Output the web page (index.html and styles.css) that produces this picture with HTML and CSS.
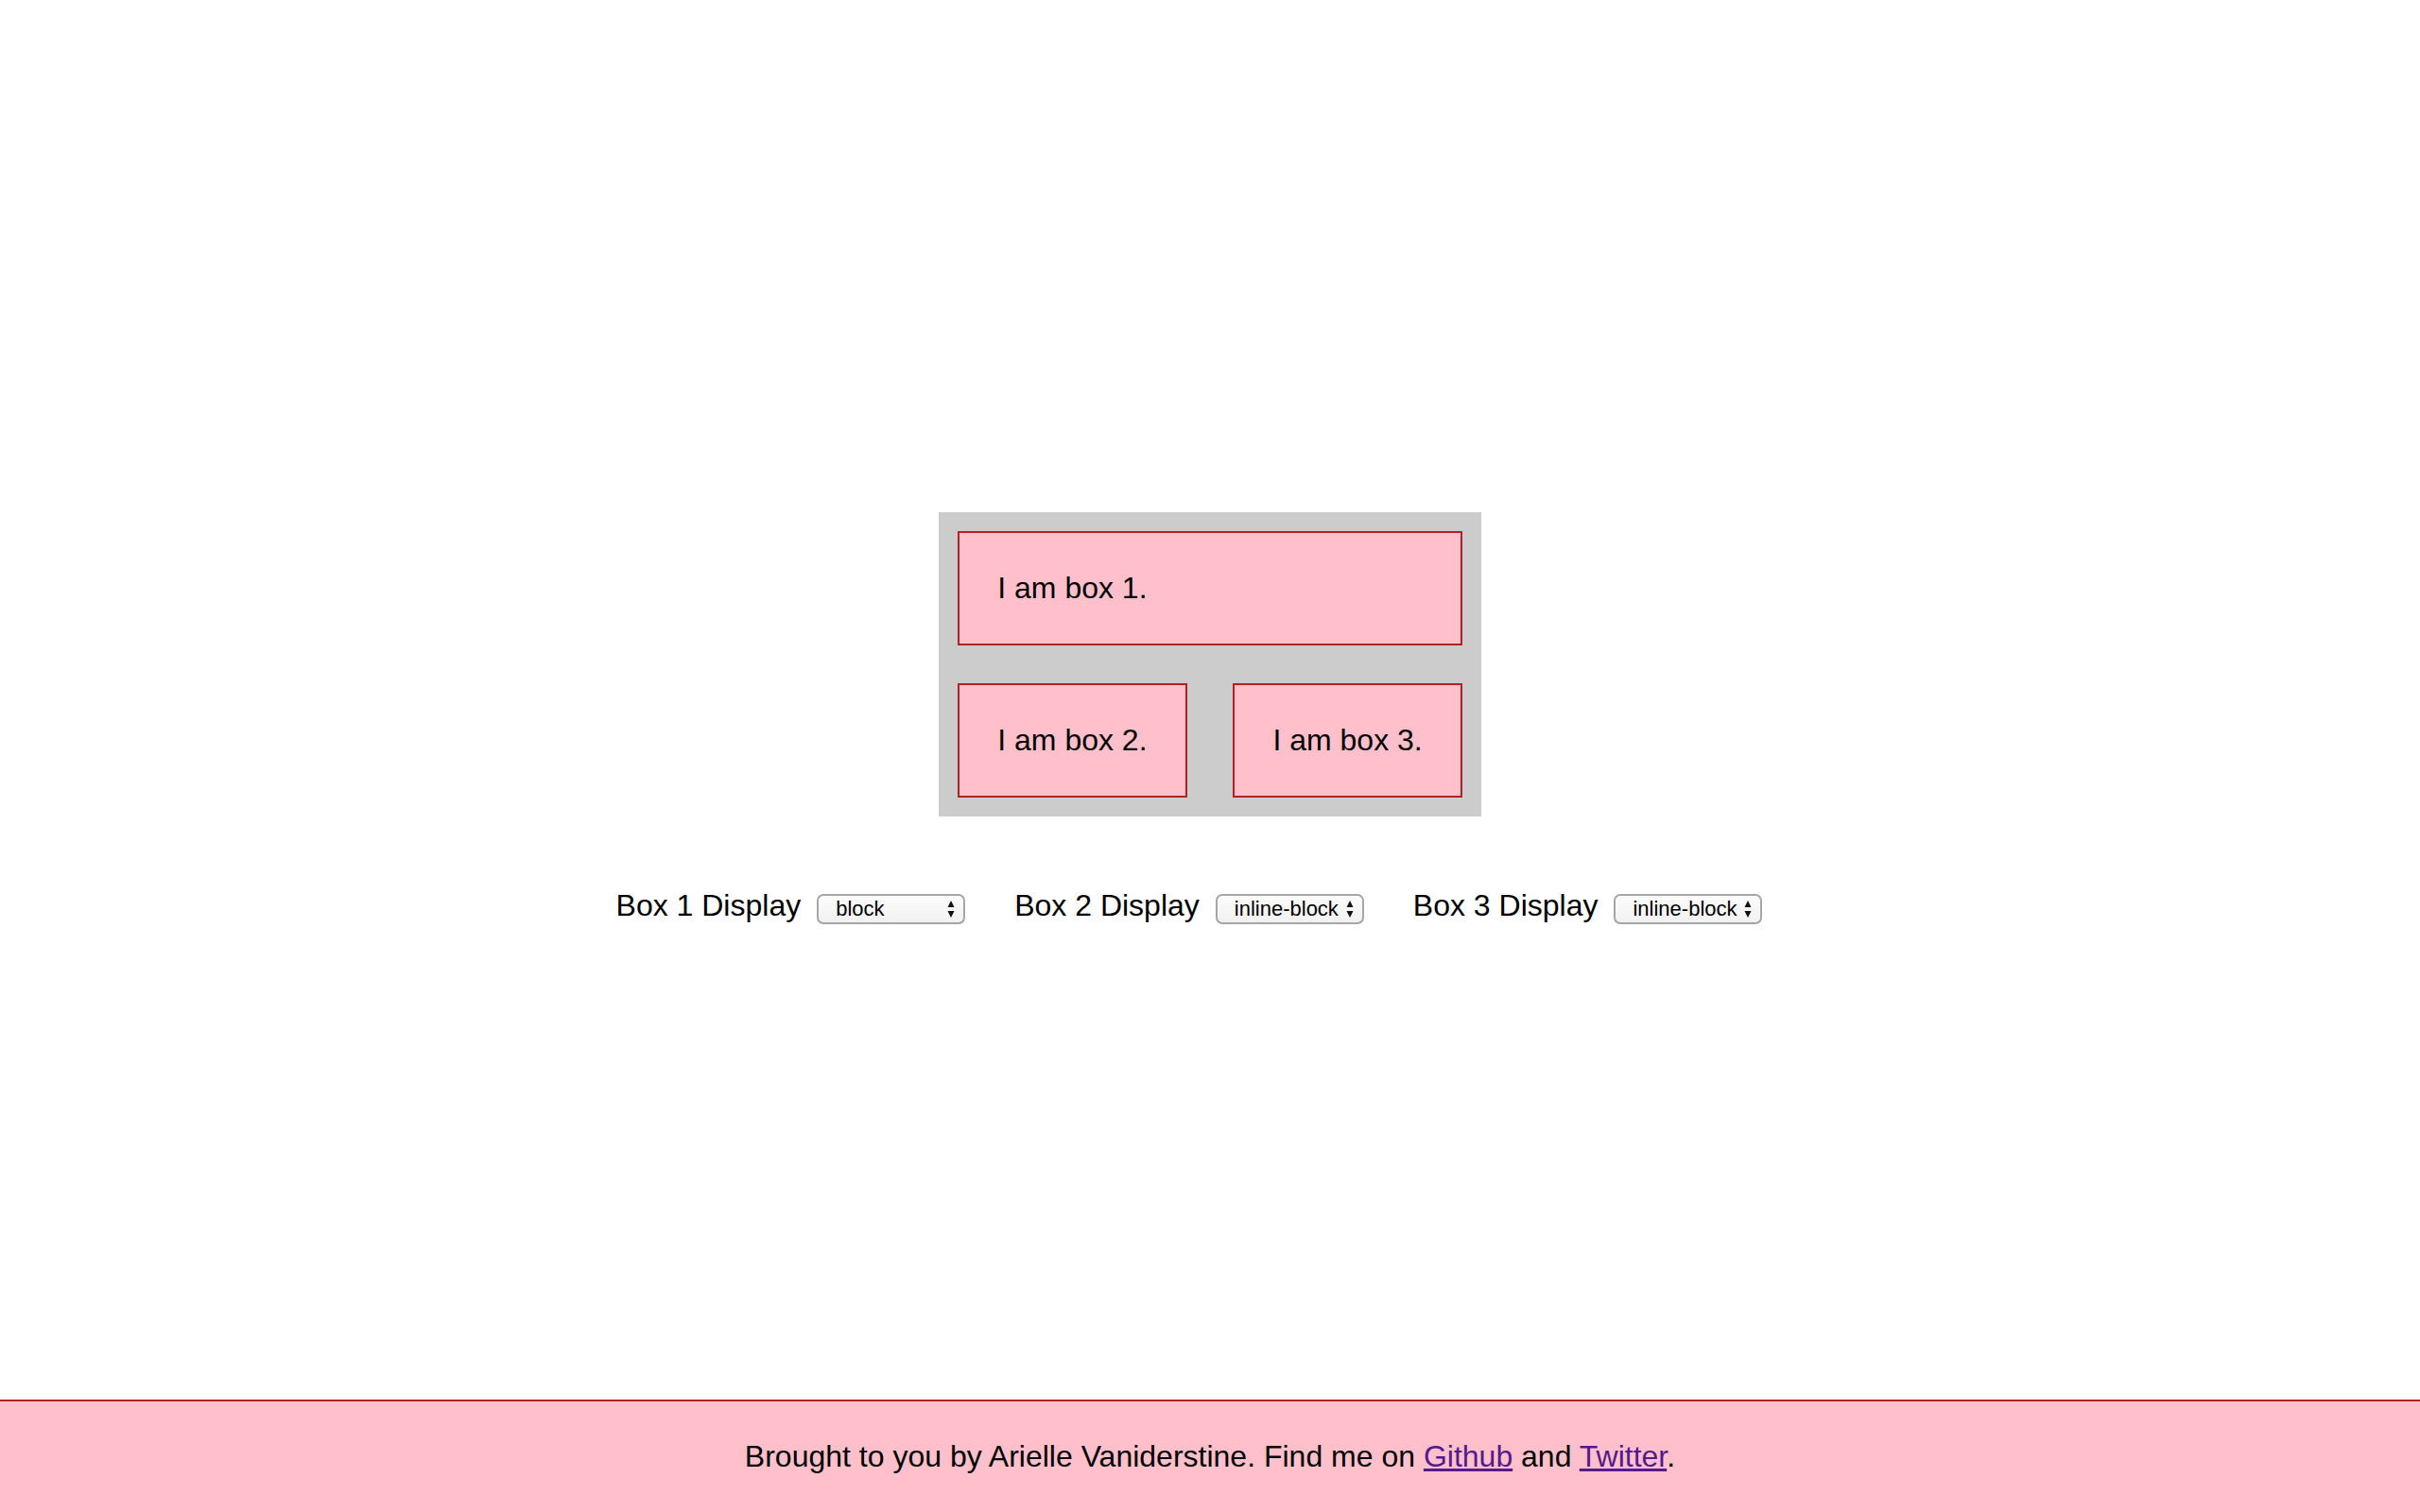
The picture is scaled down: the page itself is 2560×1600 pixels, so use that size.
FILE: index.html
```html
<!DOCTYPE html>
<html lang="en">
<head>
<meta charset="utf-8">
<title>Display Playground</title>
<link rel="stylesheet" href="styles.css">
</head>
<body>
<main class="main">
  <div class="stage">
    <div class="box box-block">I am box 1.</div>
    <div class="box">I am box 2.</div> <div class="box">I am box 3.</div>
  </div>
  <div class="controls">
    <div class="control">
      <label class="control-label" for="s1">Box 1 Display</label>
      <span class="select-wrap">
        <select id="s1" class="select"><option>block</option><option>inline-block</option><option>inline</option></select>
        <svg class="select-arrows" width="8" height="18" viewBox="0 0 8 18"><path d="M4 0 L7.5 7 L0.5 7 Z M0.5 11 L7.5 11 L4 18 Z" fill="#111"/></svg>
      </span>
    </div>
    <div class="control">
      <label class="control-label" for="s2">Box 2 Display</label>
      <span class="select-wrap">
        <select id="s2" class="select"><option>inline-block</option><option>block</option><option>inline</option></select>
        <svg class="select-arrows" width="8" height="18" viewBox="0 0 8 18"><path d="M4 0 L7.5 7 L0.5 7 Z M0.5 11 L7.5 11 L4 18 Z" fill="#111"/></svg>
      </span>
    </div>
    <div class="control">
      <label class="control-label" for="s3">Box 3 Display</label>
      <span class="select-wrap">
        <select id="s3" class="select"><option>inline-block</option><option>block</option><option>inline</option></select>
        <svg class="select-arrows" width="8" height="18" viewBox="0 0 8 18"><path d="M4 0 L7.5 7 L0.5 7 Z M0.5 11 L7.5 11 L4 18 Z" fill="#111"/></svg>
      </span>
    </div>
  </div>
</main>
<footer class="footer">Brought to you by Arielle Vaniderstine. Find me on <a class="link" href="#">Github</a> and <a class="link" href="#">Twitter</a>.</footer>
</body>
</html>
```

FILE: styles.css
```css
html, body {
  margin: 0;
  padding: 0;
}
body {
  min-height: 100vh;
  display: flex;
  flex-direction: column;
  background: #fff;
  color: #000;
  font-family: "Liberation Sans", Arial, sans-serif;
  font-size: 32px;
}
.main {
  flex: 1 0 auto;
  padding-top: 542px;
  text-align: center;
}
.stage {
  display: inline-block;
  vertical-align: top;
  background: #cccccc;
  text-align: left;
  font-size: 32px;
}
.box {
  display: inline-block;
  margin: 20px;
  padding: 40px;
  border: 2px solid #b22222;
  background: #ffc0cb;
  font-size: 32px;
}
.box-block {
  display: block;
}
.controls {
  display: flex;
  justify-content: center;
  align-items: baseline;
  gap: 12px;
  margin-top: 76px;
  padding-right: 4px;
}
.control {
  display: flex;
  align-items: baseline;
  gap: 17px;
  padding-right: 40px;
}
.control-label {
  font-size: 32px;
}
.select-wrap {
  position: relative;
  display: inline-flex;
}
.select {
  -webkit-appearance: none;
  appearance: none;
  box-sizing: border-box;
  width: 157px;
  height: 32px;
  margin: 0;
  padding: 0 0 0 18px;
  border: 2px solid #a6a6a6;
  border-radius: 7px;
  background: linear-gradient(#fcfcfc, #f1f1f1);
  color: #000;
  font-family: "Liberation Sans", Arial, sans-serif;
  font-size: 22px;
  line-height: 28px;
}
.select-arrows {
  position: absolute;
  right: 11px;
  top: 7px;
  pointer-events: none;
}
.footer {
  flex: 0 0 auto;
  border-top: 2px solid #b22222;
  background: #ffc0cb;
  padding: 40px;
  text-align: center;
  font-size: 32px;
}
.link {
  color: #551a8b;
  text-decoration: underline;
}
```
